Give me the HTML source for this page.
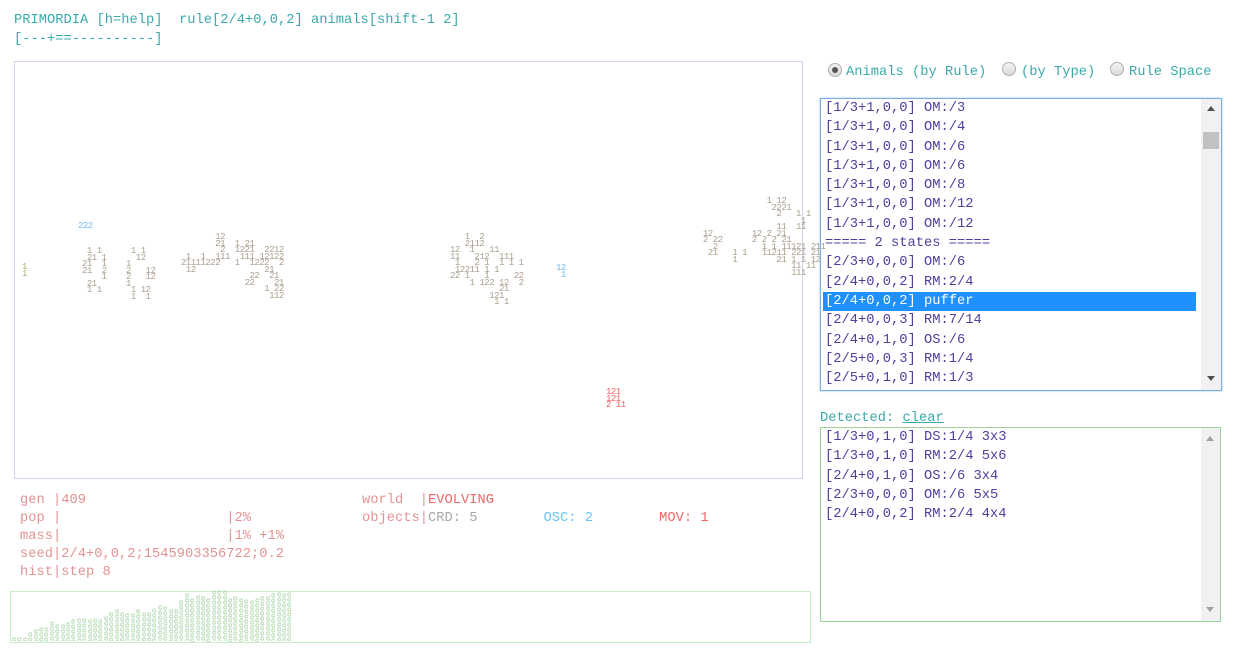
<!DOCTYPE html>
<html><head><meta charset="utf-8"><style>
body{margin:0;width:1236px;height:656px;background:#fff;font-family:"Liberation Mono",monospace;font-size:13.75px;position:relative;overflow:hidden}
.a{position:absolute;white-space:pre}
.hd{color:#3aa9ab;line-height:19px}
.cv{position:absolute;left:14px;top:61px;width:787px;height:416px;border:1px solid #d6d0f0}
.g{position:absolute;white-space:pre;font-size:9px;line-height:6.5px;color:#a89e8c;letter-spacing:-0.5px}
.st{color:#e49393;line-height:18px}
.list{position:absolute;left:820px;top:98px;width:400px;height:291px;border:1px solid #7aaee0;box-shadow:0 0 2px #9cc4ee}
.row{height:19.3px;line-height:19.3px;color:#4e3f9f;padding-left:4px;white-space:pre}
.sel{background:#1e90ff;color:#fff;margin-left:2px;padding-left:2px;width:371px}
.sb{position:absolute;right:0;top:0;width:20px;height:100%;background:#f1f1f1}
.det{position:absolute;left:820px;top:427px;width:399px;height:193px;border:1px solid #9ad49a}
.radio{position:absolute;width:12px;height:12px;border-radius:50%;border:1px solid #b0b0b0;background:linear-gradient(#f4f4f4,#d8d8d8)}
.hist{position:absolute;left:10px;top:591px;width:799px;height:50px;border:1px solid #c8f0c8}
.bar{position:absolute;bottom:0;width:4px;background:radial-gradient(circle,transparent 1px,#bcd89a 1.3px,#a8dcc8 2px,transparent 2.3px) 0 0/4.7px 5px}
</style></head><body>
<div class="a hd" style="left:14px;top:11px">PRIMORDIA [h=help]  rule[2/4+0,0,2] animals[shift-1 2]
[---+==----------]</div>

<div class="cv"></div>
<div class="g" style="left:78px;top:223px;color:#7ab8f0">222</div>
<div class="g" style="left:22px;top:264px;color:#9ab070">1
1</div>
<div class="g" style="left:82px;top:248px"> 1 1
 21 1
21  1
21  2
    1
 21
 1 1</div>
<div class="g" style="left:126px;top:248px"> 1 1
  12
1
2   12
2   12
1
 1 12
 1  1</div>
<div class="g" style="left:176px;top:234px">        12
        21  1 21
         2  1221  2212
  1  1  111  111 12122
 21111222   1  1222  2
  12              21
               22  21
              22    21
                  1 22
                   112</div>
<div class="g" style="left:450px;top:234px">   1  2
   2112 
12  1   11
11   212  111
 1   2 1  1 1 1
 12211 1 1
22 1   1     22
    1 122 12  2
          21
        121
         1 1</div>
<div class="g" style="left:556px;top:265px;color:#6cb8f0">12
 1</div>
<div class="g" style="left:698px;top:198px">              1 12
               2221
                2   1 1
                     1
                11  11
 12        12 2 21
 2 22      2 2 2 21
   2         1 1 11121 211
  21   1 1   11211 221 21
       1        21 1 1 12
                   11 11
                   111</div>
<div class="g" style="left:606px;top:389px;color:#f06060">121
121
2 11</div>

<div class="a st" style="left:20px;top:492px">gen |409
pop |                    |2%
mass|                    |1% +1%
seed|2/4+0,0,2;1545903356722;0.2
hist|step 8</div>
<div class="a st" style="left:362px;top:492px">world  |<span style="color:#f26868">EVOLVING</span>
objects|<span style="color:#a8a8a8">CRD: 5</span>        <span style="color:#6cc4f4">OSC: 2</span>        <span style="color:#f26868">MOV: 1</span></div>

<div class="hist"></div>
<div id="h"></div>

<div class="radio" style="left:828px;top:63px"><div style="width:6px;height:6px;border-radius:50%;background:#555;margin:3px"></div></div>
<div class="a hd" style="left:846px;top:63px">Animals (by Rule)</div>
<div class="radio" style="left:1002px;top:62px"></div>
<div class="a hd" style="left:1021px;top:63px">(by Type)</div>
<div class="radio" style="left:1110px;top:62px"></div>
<div class="a hd" style="left:1129px;top:63px">Rule Space</div>

<div class="list">
<div class="row">[1/3+1,0,0] OM:/3</div>
<div class="row">[1/3+1,0,0] OM:/4</div>
<div class="row">[1/3+1,0,0] OM:/6</div>
<div class="row">[1/3+1,0,0] OM:/6</div>
<div class="row">[1/3+1,0,0] OM:/8</div>
<div class="row">[1/3+1,0,0] OM:/12</div>
<div class="row">[1/3+1,0,0] OM:/12</div>
<div class="row">===== 2 states =====</div>
<div class="row">[2/3+0,0,0] OM:/6</div>
<div class="row">[2/4+0,0,2] RM:2/4</div>
<div class="row sel">[2/4+0,0,2] puffer</div>
<div class="row">[2/4+0,0,3] RM:7/14</div>
<div class="row">[2/4+0,1,0] OS:/6</div>
<div class="row">[2/5+0,0,3] RM:1/4</div>
<div class="row">[2/5+0,1,0] RM:1/3</div>
<div class="sb"><div style="position:absolute;left:6px;top:7px;border:4px solid transparent;border-bottom:5px solid #505050;border-top:0"></div><div style="position:absolute;left:2px;top:33px;width:16px;height:17px;background:#c1c1c1"></div><div style="position:absolute;left:6px;bottom:9px;border:4px solid transparent;border-top:5px solid #505050;border-bottom:0"></div></div>
</div>

<div class="a hd" style="left:820px;top:409px">Detected: <span style="text-decoration:underline">clear</span></div>
<div class="det">
<div class="row">[1/3+0,1,0] DS:1/4 3x3</div>
<div class="row">[1/3+0,1,0] RM:2/4 5x6</div>
<div class="row">[2/4+0,1,0] OS:/6 3x4</div>
<div class="row">[2/3+0,0,0] OM:/6 5x5</div>
<div class="row">[2/4+0,0,2] RM:2/4 4x4</div>
<div class="sb" style="width:19px"><div style="position:absolute;left:5px;top:8px;border:4px solid transparent;border-bottom:5px solid #a0a0a0;border-top:0"></div><div style="position:absolute;left:5px;bottom:9px;border:4px solid transparent;border-top:5px solid #a0a0a0;border-bottom:0"></div></div>
</div>

<script>
var hs=[3,3,3,6,8,10,10,14,12,12,13,15,16,16,15,16,15,17,20,22,20,19,19,22,20,20,23,25,24,22,22,28,33,30,32,31,30,35,35,35,30,31,30,29,28,30,31,31,33,34,33,34];
var o='';for(var i=0;i<hs.length;i++){o+='<div class="bar" style="left:'+(12+i*5.4).toFixed(1)+'px;top:'+(641-hs[i]*1.45).toFixed(0)+'px;bottom:auto;height:'+(hs[i]*1.45).toFixed(0)+'px"></div>';}
document.getElementById('h').innerHTML=o;
</script>
</body></html>
